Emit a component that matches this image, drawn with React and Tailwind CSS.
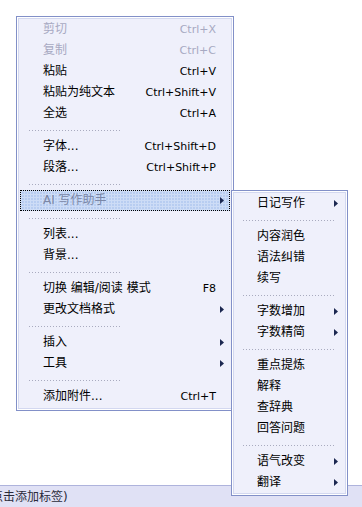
import React from "react";

const mainItems = [
  { t: "剪切", k: "Ctrl+X", dis: true },
  { t: "复制", k: "Ctrl+C", dis: true },
  { t: "粘贴", k: "Ctrl+V" },
  { t: "粘贴为纯文本", k: "Ctrl+Shift+V" },
  { t: "全选", k: "Ctrl+A" },
  { sep: true },
  { t: "字体...", k: "Ctrl+Shift+D" },
  { t: "段落...", k: "Ctrl+Shift+P" },
  { sep: true },
  { t: "AI 写作助手", sub: true, hl: true },
  { sep: true },
  { t: "列表..." },
  { t: "背景..." },
  { sep: true },
  { t: "切换 编辑/阅读 模式", k: "F8" },
  { t: "更改文档格式", sub: true },
  { sep: true },
  { t: "插入", sub: true },
  { t: "工具", sub: true },
  { sep: true },
  { t: "添加附件...", k: "Ctrl+T" },
];

const subItems = [
  { t: "日记写作", sub: true },
  { sep: true },
  { t: "内容润色" },
  { t: "语法纠错" },
  { t: "续写" },
  { sep: true },
  { t: "字数增加", sub: true },
  { t: "字数精简", sub: true },
  { sep: true },
  { t: "重点提炼" },
  { t: "解释" },
  { t: "查辞典" },
  { t: "回答问题" },
  { sep: true },
  { t: "语气改变", sub: true },
  { t: "翻译", sub: true },
];

const cjk = "font-['DejaVu_Sans','Noto_Sans_CJK_SC',sans-serif]";

function Arrow() {
  return (
    <svg width="4" height="7" viewBox="0 0 4 7" className="shrink-0">
      <path d="M0 0 L4 3.5 L0 7 Z" fill="#1b2750" />
    </svg>
  );
}

function Sep({ ml, w }) {
  return (
    <div className="h-[12px] flex items-center">
      <div
        className={`h-[1px] ${ml} ${w} bg-[repeating-linear-gradient(90deg,#a9abbf_0_1px,transparent_1px_3px)]`}
      />
    </div>
  );
}

function Row({ item, pl, prK, prA }) {
  const color = item.dis
    ? "text-[#a7a9c2]"
    : item.hl
    ? "text-[#7b87a6]"
    : "text-black";
  return (
    <div
      className={`mx-[3px] h-[21px] flex items-center border border-transparent ${
        item.hl
          ? "!border-dotted !border-black h-[20px] mb-[1px] bg-[#b8cdf1] [background-image:repeating-linear-gradient(90deg,#cddcf6_0_1px,transparent_1px_3px),repeating-linear-gradient(0deg,#cddcf6_0_1px,transparent_1px_3px)]"
          : ""
      } ${item.sub ? prA : prK} ${pl}`}
    >
      <span className={`flex-1 text-[12px] leading-[19px] whitespace-nowrap ${cjk} ${color}`}>
        {item.t}
      </span>
      {item.k && (
        <span
          className={`text-[11px] leading-[19px] whitespace-nowrap font-['DejaVu_Sans',sans-serif] ${color}`}
        >
          {item.k}
        </span>
      )}
      {item.sub && <Arrow />}
    </div>
  );
}

function Menu({ items, className, pl, prK, prA, sepMl, sepW }) {
  return (
    <div
      className={`absolute border border-[#8290c8] bg-[#eff0fb] shadow-[inset_0_0_0_1px_#ffffff,inset_0_0_0_2px_#d3d8f0] ${className}`}
    >
      {items.map((it, i) =>
        it.sep ? (
          <Sep key={i} ml={sepMl} w={sepW} />
        ) : (
          <Row key={i} item={it} pl={pl} prK={prK} prA={prA} />
        )
      )}
    </div>
  );
}

export default function App() {
  return (
    <div className="relative w-[362px] h-[507px] bg-white overflow-hidden flex flex-col">
      <div className="flex-1" />
      <div className="h-[22px] bg-[#e0e1f5] border-t border-[#aeb3dc] flex items-center overflow-hidden">
        <span
          className={`ml-[-9px] text-[12px] leading-[20px] whitespace-nowrap text-[#2a2a3a] ${cjk}`}
        >
          点击添加标签)
        </span>
      </div>

      <Menu
        items={mainItems}
        className="left-[16px] top-[16px] w-[218px] pt-[2px] pb-[3px]"
        pl="pl-[22px]"
        prK="pr-[13px]"
        prA="pr-[5px]"
        sepMl="ml-[12px]"
        sepW="w-[91px]"
      />
      <Menu
        items={subItems}
        className="left-[231px] top-[190px] w-[117px] pt-[2px] pb-[2px]"
        pl="pl-[21px]"
        prK="pr-[5px]"
        prA="pr-[5px]"
        sepMl="ml-[11px]"
        sepW="w-[92px]"
      />
    </div>
  );
}
